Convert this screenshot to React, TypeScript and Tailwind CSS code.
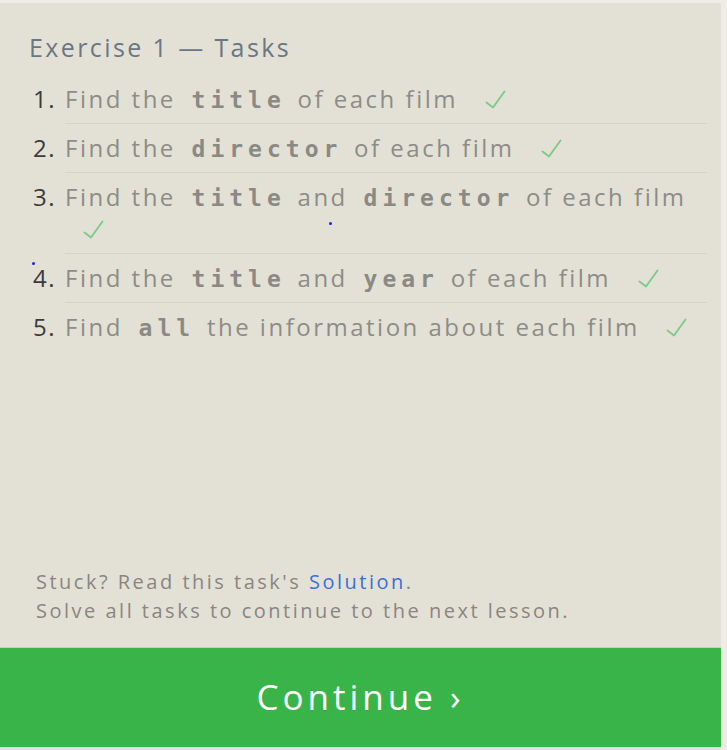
import React from "react";

// Exercise task list panel with the green "Continue" bar at the bottom.
const sans = "font-['Open_Sans','Liberation_Sans',sans-serif]";
const mono = "font-['DejaVu_Sans_Mono','Liberation_Mono',monospace]";

type Part = string | { code: string };

const tasks: Part[][] = [
  ["Find the ", { code: "title" }, " of each film"],
  ["Find the ", { code: "director" }, " of each film"],
  ["Find the ", { code: "title" }, " and ", { code: "director" }, " of each film"],
  ["Find the ", { code: "title" }, " and ", { code: "year" }, " of each film"],
  ["Find ", { code: "all" }, " the information about each film"],
];

function Code({ children }: { children: string }) {
  return (
    <code className={`${mono} pl-[7px] pr-[3px] text-[23px] leading-none font-bold tracking-[5px] text-[#8a8984]`}>
      {children}
    </code>
  );
}

function Check() {
  return (
    <svg
      width="21"
      height="19"
      viewBox="0 0 21 19"
      className="ml-[18px] inline-block -translate-y-[1px] align-[-2px]"
      fill="none"
      stroke="#7ccb8a"
      strokeWidth="1.9"
      strokeLinecap="round"
      strokeLinejoin="round"
    >
      <polyline points="1.5,12.5 8,17.5 19.5,1.5" />
    </svg>
  );
}

export default function App() {
  return (
    <div className={`${sans} relative flex min-h-[750px] bg-[#eeece5]`}>
      <div className="mt-[3px] flex w-[721px] flex-col bg-[#e3e1d6]">
        <h1 className="pl-[29px] pt-[27px] text-[25px] leading-[34px] tracking-[2.4px] text-[#6b7684]">
          Exercise 1 — Tasks
        </h1>

        <ol className="mt-[11px]">
          {tasks.map((parts, i) => (
            <li key={i} className="flex">
              <span className="w-[65px] shrink-0 pl-[33px] pt-[8px] text-[24px] leading-[32px] tracking-[1.5px] text-[#3b3b3b]">
                {i + 1}.
              </span>
              <div
                className={`mr-[14px] flex-1 pb-[8px] pt-[8px] text-[24px] leading-[32px] tracking-[2.5px] text-[#8d8c87] ${
                  i < tasks.length - 1 ? "border-b border-[#d6d3c8]" : ""
                }`}
              >
                {parts.map((p, j) =>
                  typeof p === "string" ? <span key={j}>{p}</span> : <Code key={j}>{p.code}</Code>
                )}{" "}
                <Check />
              </div>
            </li>
          ))}
        </ol>

        <div className="flex-1" />

        <div className="pb-[22px] pl-[36px] text-[20px] leading-[29px] tracking-[2.5px] text-[#8a8580]">
          <p>
            Stuck? Read this task's <a className="text-[#3a6fd9]">Solution</a>.
          </p>
          <p>Solve all tasks to continue to the next lesson.</p>
        </div>

        <button className="mb-[3px] flex h-[100px] items-center justify-center border-t border-[#d2cbbd] bg-[#39b449] text-[35px] tracking-[4px] text-white">
          Continue ›
        </button>
      </div>

      {/* stray blue specks seen in the capture */}
      <span className="absolute left-[329px] top-[222px] h-[3px] w-[3px] rounded-full bg-[#1a1aff]" />
      <span className="absolute left-[32px] top-[262px] h-[3px] w-[3px] rounded-full bg-[#1a1aff]" />
    </div>
  );
}
